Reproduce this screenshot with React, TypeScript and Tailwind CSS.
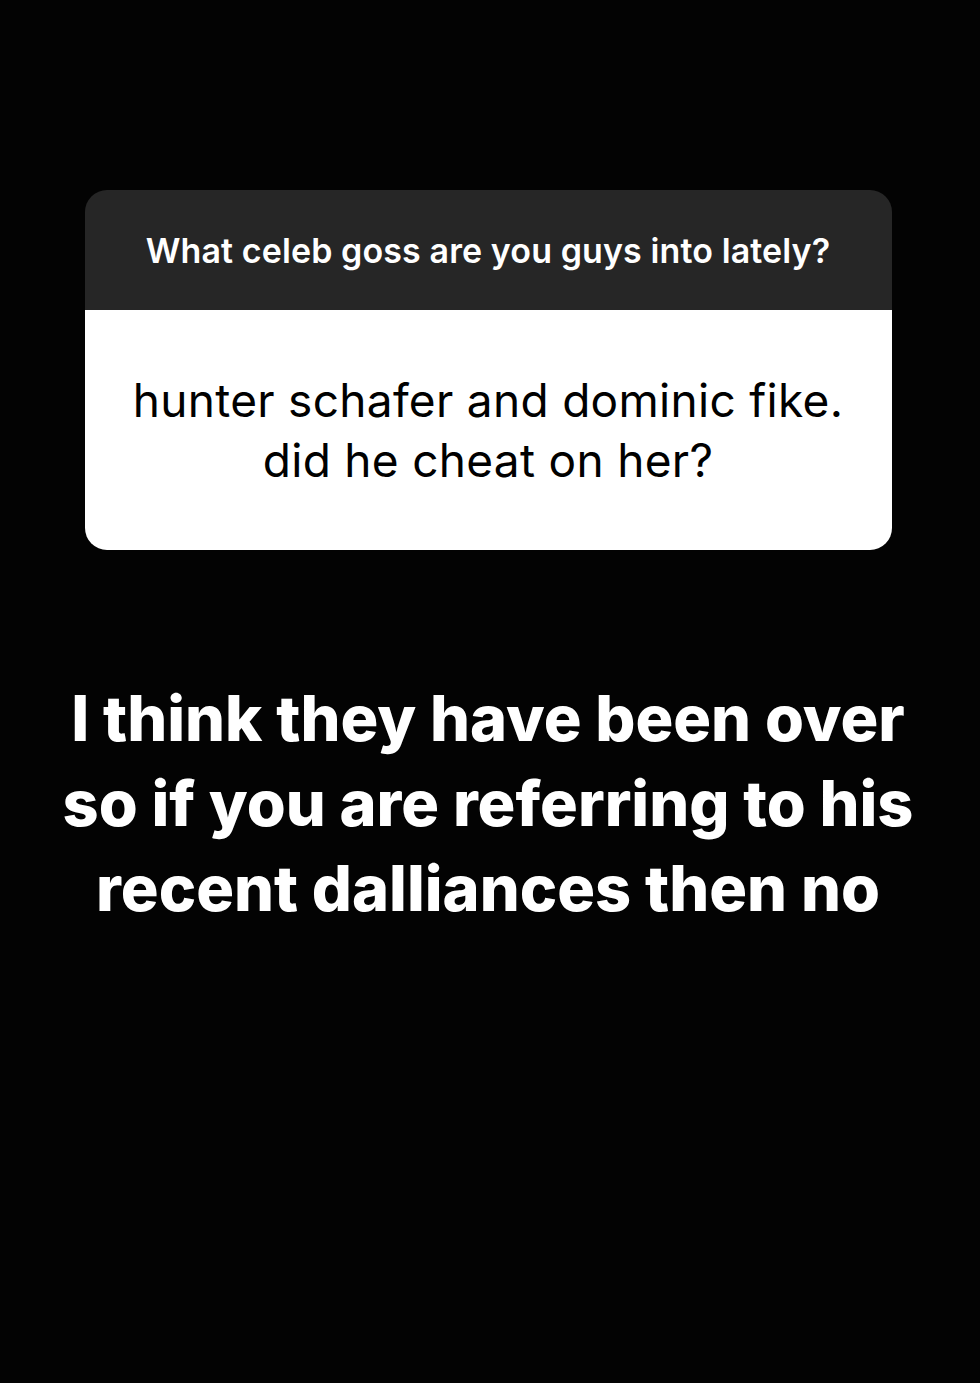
export default function App() {
  return (
    <div
      className="w-[980px] h-[1383px] bg-[#030303] flex flex-col items-center pr-[4px] overflow-hidden"
      style={{ fontFamily: 'Inter, "Liberation Sans", sans-serif' }}
    >
      <div className="mt-[190px] w-[807px] rounded-[22px] overflow-hidden">
        <div className="h-[120px] bg-[#262626] flex items-center justify-center">
          <p className="text-white text-[34px] font-semibold tracking-[0.1px]">
            What celeb goss are you guys into lately?
          </p>
        </div>
        <div className="h-[240px] bg-white flex items-center justify-center">
          <p className="text-black text-[46px] leading-[60px] text-center tracking-[0.3px]">
            hunter schafer and dominic fike.
            <br />
            did he cheat on her?
          </p>
        </div>
      </div>
      <p className="mt-[126px] text-white text-[63px] leading-[85px] font-extrabold text-center">
        I think they have been over
        <br />
        so if you are referring to his
        <br />
        recent dalliances then no
      </p>
    </div>
  )
}
